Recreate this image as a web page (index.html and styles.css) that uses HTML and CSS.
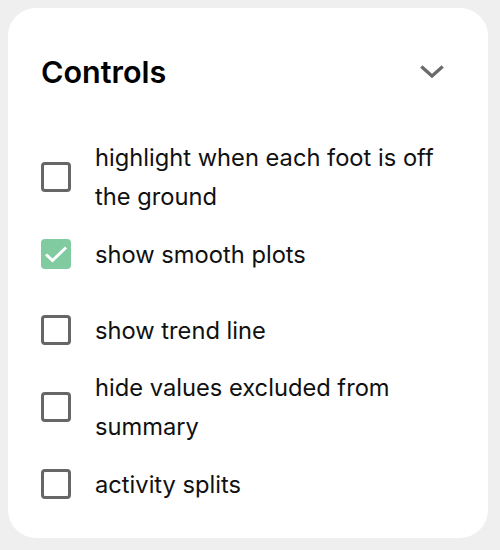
FILE: index.html
```html
<!DOCTYPE html>
<html>
<head>
<meta charset="utf-8">
<link rel="stylesheet" href="styles.css">
</head>
<body>
<div class="card">
  <div class="header">
    <h2 class="title">Controls</h2>
    <svg class="chevron" width="24" height="16" viewBox="0 0 24 16"><path d="M2.5 3.5 L12 12 L21.5 3.5" fill="none" stroke="#6b6b6b" stroke-width="3.2" stroke-linecap="square"/></svg>
  </div>
  <ul class="list">
    <li class="row"><span class="box"></span><span class="label">highlight when each foot is off the ground</span></li>
    <li class="row"><span class="box checked"><svg width="30" height="30" viewBox="0 0 30 30"><path d="M5 15.5 L11.5 21.5 L25 8.5" fill="none" stroke="#fff" stroke-width="3"/></svg></span><span class="label">show smooth plots</span></li>
    <li class="row"><span class="box"></span><span class="label">show trend line</span></li>
    <li class="row"><span class="box"></span><span class="label">hide values excluded from summary</span></li>
    <li class="row"><span class="box"></span><span class="label">activity splits</span></li>
  </ul>
</div>
</body>
</html>
```
FILE: styles.css
```css
html, body {
  margin: 0;
  padding: 0;
  background: #efefef;
}
body {
  padding: 8px;
  font-family: Inter, "Noto Sans", sans-serif;
  color: #111;
}
.card {
  width: 480px;
  height: 530px;
  box-sizing: border-box;
  background: #fff;
  border-radius: 28px;
  padding: 44px 45px 16px 33px;
}
.header {
  display: flex;
  align-items: center;
  justify-content: space-between;
  height: 40px;
}
.title {
  margin: 0;
  font-size: 30.5px;
  font-weight: 600;
  color: #000;
  line-height: 40px;
}
.chevron {
  display: block;
  margin-right: -1px;
}
.list {
  list-style: none;
  margin: 46px 0 0 0;
  padding: 0;
}
.row {
  display: flex;
  align-items: center;
  min-height: 76px;
  gap: 24px;
}
.box {
  flex: none;
  width: 30px;
  height: 30px;
  box-sizing: border-box;
  border: 3px solid #666;
  border-radius: 4px;
}
.box.checked {
  border: none;
  background: #80cba0;
}
.box.checked svg {
  display: block;
}
.label {
  font-size: 23.7px;
  line-height: 39px;
  color: #111;
}
```
